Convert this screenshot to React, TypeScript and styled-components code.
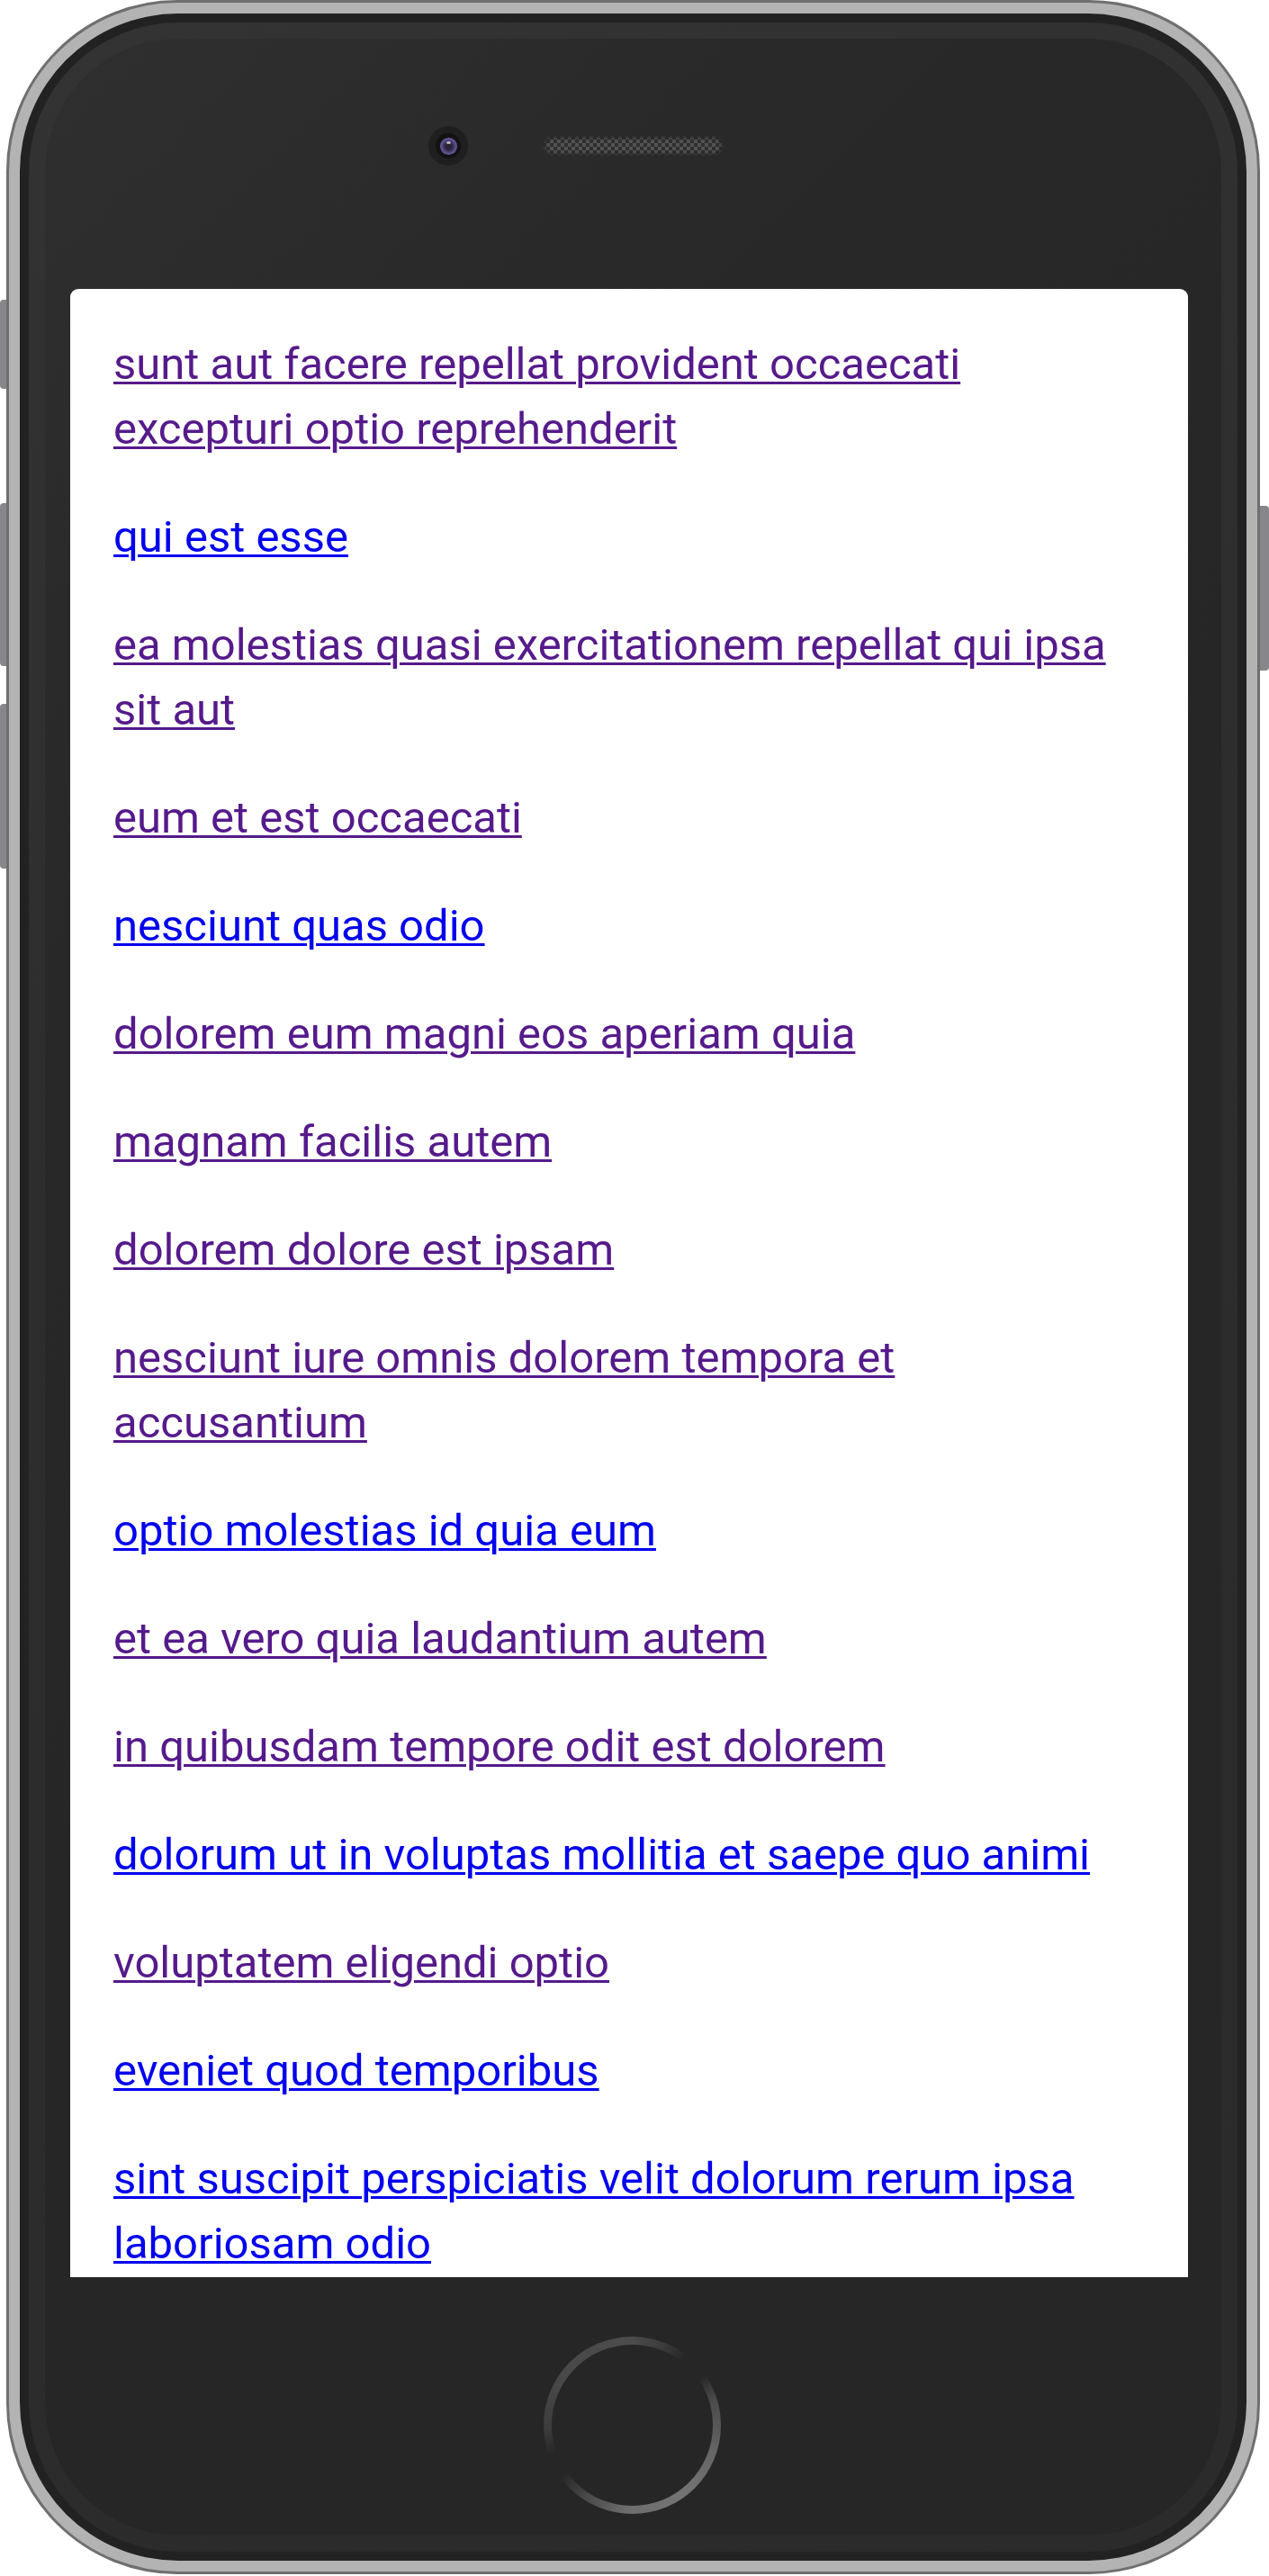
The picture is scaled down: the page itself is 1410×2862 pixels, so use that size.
import { createGlobalStyle } from 'styled-components';
import styled from 'styled-components';

type Post = {
    id: number;
    title: string;
    visited: boolean;
};

const posts: Post[] = [
    { id: 1, title: 'sunt aut facere repellat provident occaecati excepturi optio reprehenderit', visited: true },
    { id: 2, title: 'qui est esse', visited: false },
    { id: 3, title: 'ea molestias quasi exercitationem repellat qui ipsa sit aut', visited: true },
    { id: 4, title: 'eum et est occaecati', visited: true },
    { id: 5, title: 'nesciunt quas odio', visited: false },
    { id: 6, title: 'dolorem eum magni eos aperiam quia', visited: true },
    { id: 7, title: 'magnam facilis autem', visited: true },
    { id: 8, title: 'dolorem dolore est ipsam', visited: true },
    { id: 9, title: 'nesciunt iure omnis dolorem tempora et accusantium', visited: true },
    { id: 10, title: 'optio molestias id quia eum', visited: false },
    { id: 11, title: 'et ea vero quia laudantium autem', visited: true },
    { id: 12, title: 'in quibusdam tempore odit est dolorem', visited: true },
    { id: 13, title: 'dolorum ut in voluptas mollitia et saepe quo animi', visited: false },
    { id: 14, title: 'voluptatem eligendi optio', visited: true },
    { id: 15, title: 'eveniet quod temporibus', visited: false },
    { id: 16, title: 'sint suscipit perspiciatis velit dolorum rerum ipsa laboriosam odio', visited: false },
];

const GlobalStyle = createGlobalStyle`
    html, body {
        margin: 0;
        padding: 0;
        background: #ffffff;
    }

    * {
        box-sizing: border-box;
    }
`;

const Device = styled.div`
    display: flex;
    width: 1410px;
    height: 2862px;
`;

const Rail = styled.div<{ $side: 'left' | 'right' }>`
    display: flex;
    flex-direction: column;
    width: ${(p) => (p.$side === 'left' ? '7px' : '10px')};
    flex-shrink: 0;
    align-items: ${(p) => (p.$side === 'left' ? 'flex-start' : 'flex-end')};
`;

const SideButton = styled.div<{ $side: 'left' | 'right'; $top: number; $height: number }>`
    width: 10px;
    flex-shrink: 0;
    height: ${(p) => p.$height}px;
    margin-top: ${(p) => p.$top}px;
    background: #86868b;
    border-radius: ${(p) => (p.$side === 'left' ? '4px 0 0 4px' : '0 4px 4px 0')};
`;

const Frame = styled.div`
    position: relative;
    z-index: 1;
    width: 1393px;
    height: 2860px;
    flex-shrink: 0;
    padding: 12px;
    background: #b3b3b3;
    border: 3px solid #6f6f6f;
    border-radius: 190px;
`;

const Bezel = styled.div`
    height: 100%;
    padding: 10px;
    background: #222222;
    border-radius: 176px;
`;

const Face = styled.div`
    height: 100%;
    padding: 18px;
    background: linear-gradient(160deg, #333333 0%, #2d2d2d 40%, #2b2b2b 100%);
    border-radius: 166px;
`;

const Body = styled.div`
    display: flex;
    flex-direction: column;
    height: 100%;
    background: linear-gradient(135deg, #2f2f2f 0%, #282828 25%, #262626 50%);
    border-radius: 148px;
`;

const TopBar = styled.div`
    display: flex;
    justify-content: center;
    align-items: center;
    gap: 83px;
    height: 278px;
    padding-bottom: 40px;
    flex-shrink: 0;
`;

const Camera = styled.div<{ $hidden?: boolean }>`
    display: flex;
    align-items: center;
    justify-content: center;
    width: 44px;
    height: 44px;
    border-radius: 50%;
    background: ${(p) => (p.$hidden ? 'transparent' : '#1f1f1f')};
`;

const CameraRing = styled.div`
    display: flex;
    align-items: center;
    justify-content: center;
    width: 28px;
    height: 28px;
    border-radius: 50%;
    background: #121214;
`;

const Lens = styled.div`
    display: flex;
    justify-content: center;
    width: 19px;
    height: 19px;
    padding-top: 4px;
    border-radius: 50%;
    background: radial-gradient(circle at 50% 50%, #25212f 0%, #2c2740 30%, #5a4a86 55%, #6a5a98 70%, #43385f 100%);
`;

const Glint = styled.div`
    width: 5px;
    height: 3px;
    border-radius: 50%;
    background: #b9b4c8;
`;

const Speaker = styled.div`
    width: 201px;
    height: 22px;
    border-radius: 11px;
    background: conic-gradient(#585858 25%, #303030 0 50%, #585858 0 75%, #303030 0);
    background-size: 8px 8px;
    box-shadow: inset 0 0 4px 2px #262626;
    opacity: 0.9;
`;

const Screen = styled.div`
    height: 2209px;
    margin: 0 37px 0 28px;
    flex-shrink: 0;
    overflow: hidden;
    background: #ffffff;
    border-radius: 9px 9px 0 0;
    padding: 48px;
`;

const Item = styled.p`
    margin: 0 0 48px;
    font-family: Roboto, 'Noto Sans', sans-serif;
    font-size: 49px;
    line-height: 72px;
`;

const Link = styled.a<{ $visited: boolean }>`
    color: ${(p) => (p.$visited ? '#551a8b' : '#0000ee')};
    text-decoration: underline;
    text-decoration-thickness: 3px;
    text-underline-offset: 3px;
`;

const HomeArea = styled.div`
    display: flex;
    justify-content: center;
    flex: 1;
    padding-top: 66px;
`;

const HomeButton = styled.div`
    width: 197px;
    height: 197px;
    margin-left: -3px;
    padding: 9px;
    border-radius: 50%;
    background: conic-gradient(
        #4c4c4c 0deg,
        #3a3a3a 22deg,
        #262626 38deg,
        #262626 55deg,
        #4a4a4a 72deg,
        #666666 110deg,
        #747474 145deg,
        #6c6c6c 185deg,
        #454545 215deg,
        #262626 235deg,
        #262626 250deg,
        #3c3c3c 268deg,
        #484848 300deg,
        #4c4c4c 360deg
    );
`;

const HomeInner = styled.div`
    width: 100%;
    height: 100%;
    border-radius: 50%;
    background: #262626;
`;

const App = () => {
    return (
        <>
            <GlobalStyle />
            <Device>
                <Rail $side="left">
                    <SideButton $side="left" $top={333} $height={99} />
                    <SideButton $side="left" $top={127} $height={181} />
                    <SideButton $side="left" $top={42} $height={183} />
                </Rail>
                <Frame>
                    <Bezel>
                        <Face>
                            <Body>
                                <TopBar>
                                    <Camera>
                                        <CameraRing>
                                            <Lens>
                                                <Glint />
                                            </Lens>
                                        </CameraRing>
                                    </Camera>
                                    <Speaker />
                                    <Camera $hidden />
                                </TopBar>
                                <Screen>
                                    {posts.map((post) => (
                                        <Item key={post.id}>
                                            <Link href={`#/posts/${post.id}`} $visited={post.visited}>
                                                {post.title}
                                            </Link>
                                        </Item>
                                    ))}
                                </Screen>
                                <HomeArea>
                                    <HomeButton>
                                        <HomeInner />
                                    </HomeButton>
                                </HomeArea>
                            </Body>
                        </Face>
                    </Bezel>
                </Frame>
                <Rail $side="right">
                    <SideButton $side="right" $top={562} $height={183} />
                </Rail>
            </Device>
        </>
    );
};

export default App;
